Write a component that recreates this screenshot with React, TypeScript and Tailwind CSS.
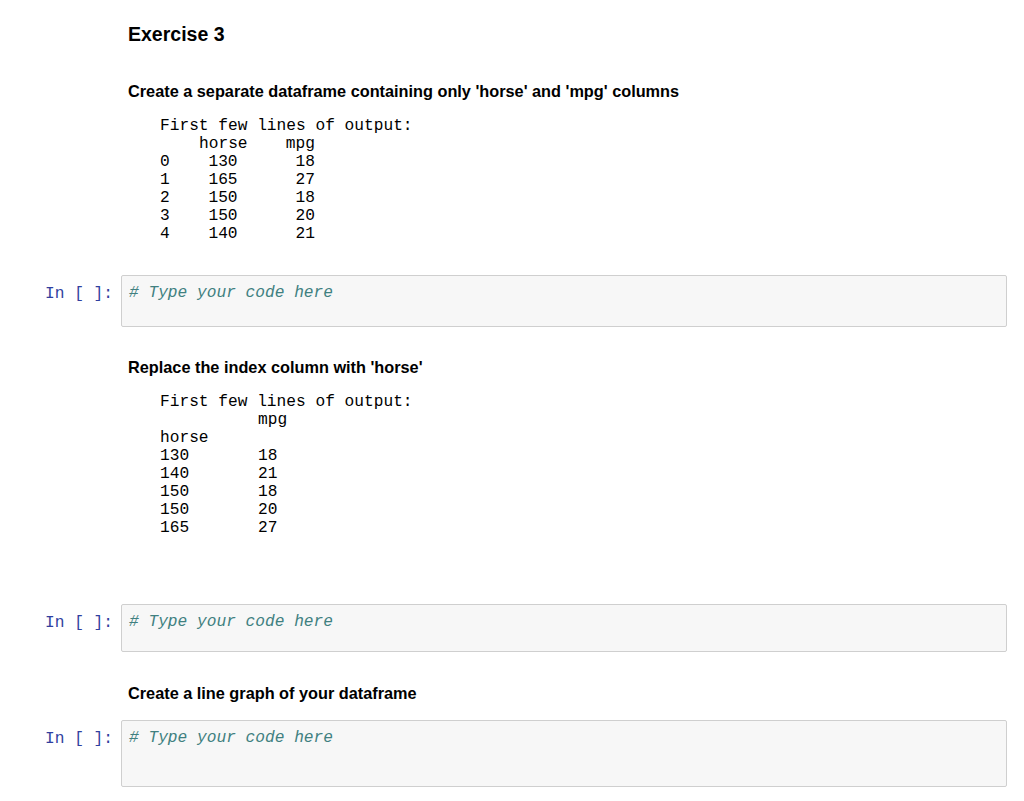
import React from 'react'

const MONO = 'font-["Liberation_Mono","Courier_New",monospace]'

const tabla1 = [
  ['0', '130', '18'],
  ['1', '165', '27'],
  ['2', '150', '18'],
  ['3', '150', '20'],
  ['4', '140', '21'],
]

const tabla2 = [
  ['130', '18'],
  ['140', '21'],
  ['150', '18'],
  ['150', '20'],
  ['165', '27'],
]

function CodeCell({ alto, mt }: { alto: string; mt: string }) {
  return (
    <div className={`flex ${mt}`}>
      <div className={`w-[121px] pr-[8px] pt-[10px] text-right text-[16.2px] leading-[18px] text-[#303F9F] ${MONO}`}>
        In [ ]:
      </div>
      <div className={`w-[886px] ${alto} border border-[#cfcfcf] bg-[#f7f7f7] rounded-[2px] pl-[7px] pt-[8px] text-[16.2px] leading-[18px] ${MONO}`}>
        <span className="italic text-[#408080]"># Type your code here</span>
      </div>
    </div>
  )
}

export default function App() {
  return (
    <div className='w-[1024px] h-[801px] bg-white overflow-hidden font-["Liberation_Sans",Arial,sans-serif] text-black'>
      {/* Enunciado */}
      <div className="pl-[128px] pt-[22px]">
        <h3 className="text-[19.5px] leading-[24px] font-bold">Exercise 3</h3>
        <p className="mt-[35px] text-[16.3px] leading-[20px] font-bold">
          Create a separate dataframe containing only 'horse' and 'mpg' columns
        </p>
        <div className={`mt-[16px] pl-[32px] text-[16.2px] leading-[18px] ${MONO}`}>
          <div>First few lines of output:</div>
          <div className="grid grid-cols-[39px_48px_68px]">
            <span />
            <span className="text-center">horse</span>
            <span className="text-right">mpg</span>
            {tabla1.map(([i, h, m]) => (
              <React.Fragment key={i}>
                <span>{i}</span>
                <span className="text-center">{h}</span>
                <span className="text-right">{m}</span>
              </React.Fragment>
            ))}
          </div>
        </div>
      </div>

      <CodeCell alto="h-[52px]" mt="mt-[32px]" />

      <div className="pl-[128px]">
        <p className="mt-[30px] text-[16.3px] leading-[20px] font-bold">Replace the index column with 'horse'</p>
        <div className={`mt-[16px] pl-[32px] text-[16.2px] leading-[18px] ${MONO}`}>
          <div>First few lines of output:</div>
          <div className="grid grid-cols-[98px_60px]">
            <span />
            <span>mpg</span>
            <span>horse</span>
            <span />
            {tabla2.map(([h, m], k) => (
              <React.Fragment key={k}>
                <span>{h}</span>
                <span>{m}</span>
              </React.Fragment>
            ))}
          </div>
        </div>
      </div>

      <CodeCell alto="h-[48px]" mt="mt-[67px]" />

      <div className="pl-[128px]">
        <p className="mt-[31px] text-[16.3px] leading-[20px] font-bold">Create a line graph of your dataframe</p>
      </div>

      <CodeCell alto="h-[67px]" mt="mt-[17px]" />
    </div>
  )
}
